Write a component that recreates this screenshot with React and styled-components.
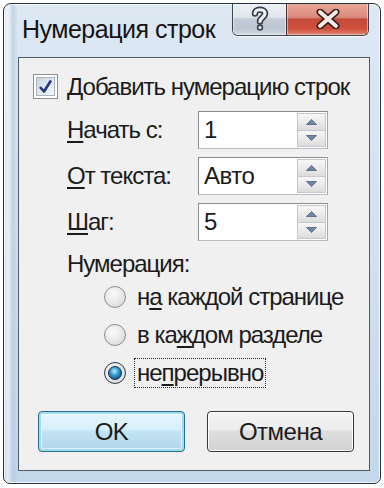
import React, { useState } from "react";
import styled, { createGlobalStyle, css } from "styled-components";

const GlobalStyle = createGlobalStyle`
  body {
    margin: 0;
    background: #ffffff;
    font-family: "Liberation Sans", Arial, sans-serif;
    color: #1b1b1b;
  }
`;

const Window = styled.div`
  box-sizing: border-box;
  margin: 3px 0 0 3px;
  width: 378px;
  height: 481px;
  border: 1px solid #25323e;
  border-radius: 8px 8px 7px 7px;
  background: linear-gradient(
      90deg,
      rgba(255, 255, 255, 0) 0px,
      rgba(255, 255, 255, 0.55) 4px,
      rgba(170, 195, 215, 0.5) 9px,
      rgba(255, 255, 255, 0) 14px
    ),
    linear-gradient(180deg, #dde8f3 0%, #d3e2ef 45%, #c3d8ea 100%);
  box-shadow: inset 0 0 0 1px rgba(255, 255, 255, 0.8);
  display: flex;
  flex-direction: column;
  overflow: hidden;
`;

const TitleBar = styled.div`
  height: 53px;
  flex-shrink: 0;
  display: flex;
  align-items: flex-start;
  padding-left: 18px;
`;

const Title = styled.div`
  margin-top: 10px;
  font-size: 25px;
  line-height: 30px;
  letter-spacing: -0.5px;
  color: #141414;
`;

const CaptionButtons = styled.div`
  margin: -1px 11px 0 auto;
  display: flex;
  height: 32px;
  border: 1px solid #3a4450;
  border-top: none;
  border-radius: 0 0 6px 6px;
  overflow: hidden;
  box-shadow: 0 1px 0 rgba(255, 255, 255, 0.8);
`;

const CaptionButton = styled.div`
  width: ${({ $w }) => $w}px;
  display: flex;
  align-items: center;
  justify-content: center;
  box-shadow: inset 0 0 0 1px rgba(255, 255, 255, 0.45);
  ${({ $close }) =>
    $close
      ? css`
          background: linear-gradient(
            180deg,
            #e9a99b 0%,
            #d98a7c 45%,
            #c44a3a 50%,
            #d0503c 80%,
            #e0846a 100%
          );
          border-left: 1px solid #4a2a26;
        `
      : css`
          background: linear-gradient(
            180deg,
            #eef2f6 0%,
            #dfe5eb 45%,
            #c3ccd6 50%,
            #bcc6d1 80%,
            #d3dbe3 100%
          );
        `}
`;

const Panel = styled.div`
  flex: 1;
  margin: 0 10px 12px 14px;
  border: 1px solid #4f5b66;
  background: #f0f0f0;
  padding: 16px 0 0 14px;
  display: flex;
  flex-direction: column;
  font-size: 24px;
  letter-spacing: -1px;
`;

const CheckRow = styled.div`
  display: flex;
  align-items: center;
  height: 25px;
`;

const CheckBox = styled.div`
  box-sizing: border-box;
  width: 25px;
  height: 25px;
  border: 1px solid #8e8f8f;
  background: #ffffff;
  padding: 2px;
  display: flex;
`;

const CheckInner = styled.div`
  flex: 1;
  background: linear-gradient(135deg, #c9d3df 0%, #e3e9f0 55%, #f4f6f9 100%);
  border: 1px solid #a9b3c0;
  display: flex;
  align-items: center;
  justify-content: center;
`;

const CheckLabel = styled.span`
  margin-left: 9px;
  line-height: 28px;
`;

const Key = styled.u`
  text-decoration-thickness: 2px;
  text-underline-offset: 3px;
`;

const FieldGrid = styled.div`
  margin: 12px 0 0 34px;
  display: grid;
  grid-template-columns: 131px 130px;
  row-gap: 8px;
  align-items: center;
`;

const FieldLabel = styled.span`
  line-height: 28px;
`;

const Field = styled.div`
  box-sizing: border-box;
  height: 38px;
  border: 1px solid #8a8d92;
  border-bottom-color: #b6bcc4;
  border-right-color: #a4a9b0;
  background: #ffffff;
  display: flex;
  align-items: center;
  padding: 1px 1px 1px 5px;
`;

const FieldValue = styled.span`
  flex: 1;
  line-height: 28px;
  letter-spacing: -0.5px;
`;

const Spin = styled.div`
  width: 29px;
  align-self: stretch;
  display: flex;
  flex-direction: column;
`;

const SpinButton = styled.div`
  flex: 1;
  box-sizing: border-box;
  border: 1px solid #c4c7cc;
  ${({ $down }) => ($down ? "border-top: none;" : "")}
  background: linear-gradient(180deg, #f7f7f7 0%, #ebebeb 50%, #dcdcdc 100%);
  display: flex;
  align-items: center;
  justify-content: center;
`;

const SectionLabel = styled.div`
  margin: 9px 0 0 34px;
  line-height: 28px;
`;

const RadioList = styled.div`
  margin: 4px 0 0 71px;
  display: flex;
  flex-direction: column;
  gap: 8px;
`;

const RadioRow = styled.div`
  display: flex;
  align-items: center;
  height: 30px;
`;

const Radio = styled.div`
  box-sizing: border-box;
  width: 22px;
  height: 22px;
  border-radius: 50%;
  border: 1px solid ${({ $on }) => ($on ? "#2c3a48" : "#8c8e90")};
  background: radial-gradient(circle at 40% 35%, #fbfbfb 0%, #e6e6e6 55%, #cfcfcf 100%);
  display: flex;
  align-items: center;
  justify-content: center;
`;

const RadioDot = styled.div`
  width: 12px;
  height: 12px;
  border-radius: 50%;
  border: 1px solid #0e2e48;
  background: radial-gradient(circle at 45% 35%, #bfeeff 0%, #3fa6d6 35%, #166796 70%, #0b3d62 100%);
`;

const RadioLabel = styled.span`
  box-sizing: border-box;
  margin-left: 8px;
  padding: 0 3px;
  height: 30px;
  line-height: 29px;
  outline: ${({ $focus }) => ($focus ? "1px dotted #222" : "none")};
  outline-offset: -1px;
`;

const ButtonRow = styled.div`
  margin: 23px 0 0 5px;
  display: flex;
  gap: 22px;
`;

const Button = styled.div`
  box-sizing: border-box;
  width: 147px;
  height: 41px;
  border-radius: 4px;
  display: flex;
  align-items: center;
  justify-content: center;
  letter-spacing: -0.5px;
  ${({ $primary }) =>
    $primary
      ? css`
          border: 1px solid #2c6a88;
          background: linear-gradient(180deg, #e8f6fd 0%, #d6effb 45%, #c2e3f3 50%, #b0d6eb 100%);
          box-shadow: inset 0 0 0 2px #9fdcf2, inset 0 0 0 3px rgba(255, 255, 255, 0.6);
        `
      : css`
          border: 1px solid #3a3a3a;
          background: linear-gradient(180deg, #f4f4f4 0%, #ececec 45%, #dedede 50%, #d2d2d2 100%);
          box-shadow: inset 0 0 0 1px rgba(255, 255, 255, 0.85);
        `}
`;

const HelpGlyph = () => (
  <svg width="18" height="26" viewBox="0 0 18 26">
    <g fill="none" strokeLinecap="round" strokeLinejoin="round">
      <path d="M4 7.5 C4 2.5 14 2.5 14 7.5 C14 11.5 9 11.5 9 15.5" stroke="#3a4048" strokeWidth="6.5" />
      <path d="M4 7.5 C4 2.5 14 2.5 14 7.5 C14 11.5 9 11.5 9 15.5" stroke="#eef1f4" strokeWidth="3.2" />
    </g>
    <circle cx="9" cy="21.5" r="3.2" fill="#3a4048" />
    <circle cx="9" cy="21.5" r="1.6" fill="#eef1f4" />
  </svg>
);

const CloseGlyph = () => (
  <svg width="24" height="20" viewBox="0 0 24 20">
    <g strokeLinecap="round">
      <path d="M4 3 L20 17 M20 3 L4 17" stroke="#3c1c18" strokeWidth="7" />
      <path d="M4 3 L20 17 M20 3 L4 17" stroke="#f6ece8" strokeWidth="3.8" />
    </g>
  </svg>
);

const CheckMark = () => (
  <svg width="15" height="15" viewBox="0 0 15 15">
    <path d="M2 8 L6 12.5 L13 1.5" fill="none" stroke="#23367a" strokeWidth="2.6" strokeLinejoin="round" />
  </svg>
);

const Arrow = ({ down }) => (
  <svg width="11" height="6" viewBox="0 0 11 6">
    <path
      d={down ? "M0.5 0.5 L10.5 0.5 L5.5 5.5 Z" : "M0.5 5.5 L10.5 5.5 L5.5 0.5 Z"}
      fill="#7483a8"
      stroke="#4e5d84"
      strokeWidth="0.8"
    />
  </svg>
);

const fields = [
  { label: "Начать с:", key: "Н", rest: "ачать с:", value: "1" },
  { label: "От текста:", key: "О", rest: "т текста:", value: "Авто" },
  { label: "Шаг:", key: "Ш", rest: "аг:", value: "5" },
];

const options = [
  { id: "page", pre: "н", key: "а", post: " каждой странице" },
  { id: "section", pre: "в ка", key: "ж", post: "дом разделе" },
  { id: "cont", pre: "не", key: "п", post: "рерывно" },
];

export default function App() {
  const [mode, setMode] = useState("cont");

  return (
    <>
      <GlobalStyle />
      <Window>
        <TitleBar>
          <Title>Нумерация строк</Title>
          <CaptionButtons>
            <CaptionButton $w={53}>
              <HelpGlyph />
            </CaptionButton>
            <CaptionButton $w={81} $close>
              <CloseGlyph />
            </CaptionButton>
          </CaptionButtons>
        </TitleBar>
        <Panel>
          <CheckRow>
            <CheckBox>
              <CheckInner>
                <CheckMark />
              </CheckInner>
            </CheckBox>
            <CheckLabel>
              <Key>Д</Key>обавить нумерацию строк
            </CheckLabel>
          </CheckRow>

          <FieldGrid>
            {fields.map((f) => (
              <React.Fragment key={f.label}>
                <FieldLabel>
                  <Key>{f.key}</Key>
                  {f.rest}
                </FieldLabel>
                <Field>
                  <FieldValue>{f.value}</FieldValue>
                  <Spin>
                    <SpinButton>
                      <Arrow />
                    </SpinButton>
                    <SpinButton $down>
                      <Arrow down />
                    </SpinButton>
                  </Spin>
                </Field>
              </React.Fragment>
            ))}
          </FieldGrid>

          <SectionLabel>Нумерация:</SectionLabel>
          <RadioList>
            {options.map((o) => (
              <RadioRow key={o.id} onClick={() => setMode(o.id)}>
                <Radio $on={mode === o.id}>{mode === o.id && <RadioDot />}</Radio>
                <RadioLabel $focus={mode === o.id}>
                  {o.pre}
                  <Key>{o.key}</Key>
                  {o.post}
                </RadioLabel>
              </RadioRow>
            ))}
          </RadioList>

          <ButtonRow>
            <Button $primary>OK</Button>
            <Button>Отмена</Button>
          </ButtonRow>
        </Panel>
      </Window>
    </>
  );
}
